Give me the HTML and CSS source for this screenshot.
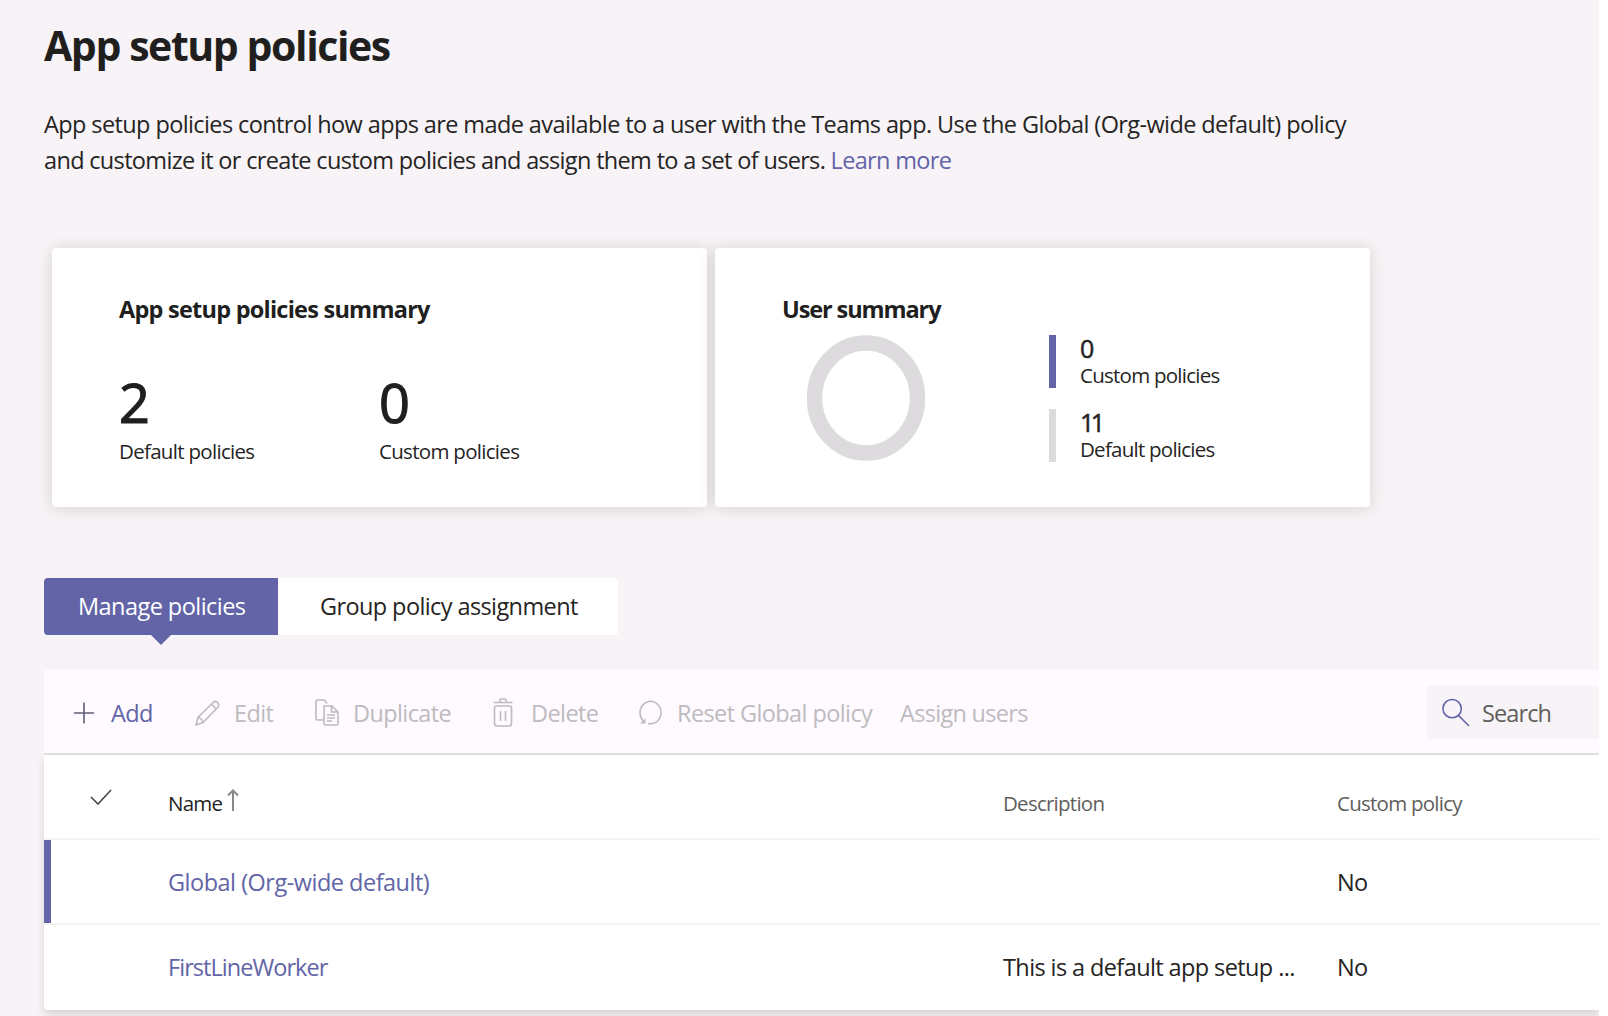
FILE: index.html
```html
<!DOCTYPE html>
<html lang="en">
<head>
<meta charset="utf-8">
<title>App setup policies</title>
<link rel="stylesheet" href="styles.css">
</head>
<body>
<main class="page">
  <h1 class="title">App setup policies</h1>
  <p class="intro">App setup policies control how apps are made available to a user with the Teams app. Use the Global (Org-wide default) policy<br><span class="intro-end">and customize it or create custom policies and assign them to a set of users. <a class="link" href="#">Learn more</a></span></p>

  <section class="cards">
    <article class="card">
      <h2 class="card-title">App setup policies summary</h2>
      <div class="stats">
        <div class="stat"><div class="stat-num">2</div><div class="stat-label">Default policies</div></div>
        <div class="stat"><div class="stat-num">0</div><div class="stat-label">Custom policies</div></div>
      </div>
    </article>
    <article class="card">
      <h2 class="card-title user-title">User summary</h2>
      <div class="usage">
        <svg class="donut" viewBox="0 0 118 126"><ellipse cx="59" cy="63" rx="51.5" ry="55" fill="none" stroke="#dddbde" stroke-width="15.5"/></svg>
        <div class="legend">
          <div class="legend-item custom"><div class="legend-num">0</div><div class="legend-label">Custom policies</div></div>
          <div class="legend-item"><div class="legend-num eleven">11</div><div class="legend-label">Default policies</div></div>
        </div>
      </div>
    </article>
  </section>

  <nav class="tabs">
    <a class="tab active" href="#">Manage policies</a>
    <a class="tab" href="#">Group policy assignment</a>
  </nav>

  <section class="panel">
    <div class="toolbar">
      <button class="tool add"><svg class="i-add" viewBox="0 0 20 22"><path d="M10 .5v21M0 11h20" /></svg><span>Add</span></button>
      <button class="tool edit"><svg class="i-edit" viewBox="0 0 25 26"><path d="M1 25l2-7.500L18.500 2q2-1.500 4 .5t.5 4.500L8 22.500zM16.500 4l4.500 5M3 17.500q4 .5 5 5"/></svg><span>Edit</span></button>
      <button class="tool dup"><svg class="i-dup" viewBox="0 0 24 27"><path d="M9 21H2.500Q1 21 1 19.500V2.500Q1 1 2.500 1H9.500L12 4.500M9 7h8l6 6v11.500q0 1.500-1.500 1.500h-11Q9 26 9 24.500zM16.500 7v6H23M12 16h8M12 19h8M12 22h5"/></svg><span>Duplicate</span></button>
      <button class="tool del"><svg class="i-del" viewBox="0 0 20 29"><path d="M.5 4.500h19M7 4V2q0-1 1-1h4q1 0 1 1v2M3.500 8h13q2 0 2 2v15.500q0 2.500-2.500 2.500h-12q-2.500 0-2.500-2.500V10q0-2 2-2zM7.500 13v10M12.500 13v10"/></svg><span>Delete</span></button>
      <button class="tool reset"><svg class="i-reset" viewBox="0 0 24 25"><path d="M5 21.500A10.500 11.300 0 1 1 15 23.300L9 24"/><path class="tip" d="M1 23.500h5.500v-5z"/></svg><span>Reset Global policy</span></button>
      <button class="tool assign"><span>Assign users</span></button>
      <div class="search"><svg class="i-search" viewBox="0 0 29 30"><circle cx="10.500" cy="11" r="9.500"/><path d="M17 18l11 11"/></svg><span>Search</span></div>
    </div>
    <div class="grid">
      <div class="row head">
        <div class="check"><svg class="i-check" viewBox="0 0 22 16"><path d="M1 8l7 7L21 1"/></svg></div>
        <div class="label name">Name <svg class="i-sort" viewBox="0 0 12 22"><path d="M6 22V1.500M1 6.500l5-5 5 5"/></svg></div>
        <div class="label">Description</div>
        <div class="label">Custom policy</div>
      </div>
      <div class="row selected">
        <div></div>
        <div><a class="link org" href="#">Global (Org-wide default)</a></div>
        <div></div>
        <div>No</div>
      </div>
      <div class="row">
        <div></div>
        <div><a class="link worker" href="#">FirstLineWorker</a></div>
        <div>This is a default app setup ...</div>
        <div>No</div>
      </div>
    </div>
  </section>
</main>
</body>
</html>
```
FILE: styles.css
```css
* { box-sizing: border-box; }
body { margin: 0; height: 1016px; overflow: hidden; background: #fff; color: #252423; font-family: "Open Sans", "Noto Sans", sans-serif; font-size: 23.5px; letter-spacing: -0.6px; }
.page { width: 1599px; height: 1016px; padding: 18px 0 0 44px; overflow: hidden; background: #f7f3f7; }
h1, h2, p { margin: 0; }
.title { font-size: 41px; line-height: 54px; font-weight: 700; letter-spacing: -1.42px; color: #201f1e; white-space: nowrap; }
.intro { margin-top: 34px; line-height: 36px; white-space: nowrap; }
.intro-end { letter-spacing: -0.67px; }
.link { color: #6264a7; text-decoration: none; }
.org { letter-spacing: -0.5px; }
.worker { letter-spacing: -0.95px; }

.cards { display: flex; gap: 8px; margin: 70px 0 0 8px; }
.card { width: 655px; height: 259px; padding: 41px 67px 0; background: #fff; border-radius: 4px; box-shadow: 0 1px 16px rgba(90, 80, 50, .2); }
.card-title { font-size: 23.5px; line-height: 40px; font-weight: 700; letter-spacing: -0.76px; color: #201f1e; white-space: nowrap; }
.user-title { letter-spacing: -1.1px; }
.stats { display: flex; margin-top: 40px; }
.stat { width: 260px; }
.stat-num { font-size: 54px; line-height: 66px; letter-spacing: 0; color: #201f1e; -webkit-text-stroke: 1.2px #201f1e; }
.stat-label { padding-top: 2px; font-size: 20.5px; line-height: 28px; letter-spacing: -0.7px; white-space: nowrap; }
.usage { display: flex; margin: 6px 0 0 25px; }
.donut { width: 118px; height: 126px; }
.legend { display: grid; gap: 21px; align-content: start; margin-left: 124px; }
.legend-item { height: 53px; padding-left: 24px; border-left: 7px solid #dddbde; }
.legend-item.custom { border-color: #6264a7; }
.legend-num { font-size: 25px; line-height: 27px; -webkit-text-stroke: .5px #252423; }
.legend-label { font-size: 20.5px; line-height: 26px; letter-spacing: -0.75px; white-space: nowrap; }
.eleven { letter-spacing: -3.5px; }

.tabs { display: flex; margin-top: 71px; height: 57px; width: 574px; background: #fff; border-radius: 4px; line-height: 57px; }
.tab { position: relative; padding-left: 42px; color: #252423; text-decoration: none; white-space: nowrap; }
.tab.active { width: 234px; padding-left: 34px; color: #fff; background: #6264a7; border-radius: 4px 0 0 4px; letter-spacing: -0.55px; }
.tab.active::after { content: ""; position: absolute; left: 107px; top: 57px; border: 10px solid transparent; border-top-color: #6264a7; border-bottom: 0; }

.panel { margin-top: 35px; }
.toolbar { display: flex; align-items: center; height: 85px; padding-top: 2px; background: #fefaff; border-bottom: 2px solid #e1dfe1; border-radius: 4px 0 0 0; }
.tool { display: flex; align-items: center; border: 0; padding: 0; background: none; font: inherit; letter-spacing: inherit; color: #bdbbbe; white-space: nowrap; }
svg { flex: none; fill: none; stroke: currentColor; stroke-width: 1.6; }
.add { width: 122px; padding-left: 30px; gap: 17px; color: #6264a7; }
.edit { width: 119px; padding-left: 29px; gap: 14px; }
.dup { width: 178px; padding-left: 30px; gap: 14px; }
.del { width: 147px; padding-left: 30px; gap: 18px; }
.reset { width: 290px; padding-left: 29px; gap: 14px; }
.assign { letter-spacing: -0.7px; }
.i-add { width: 20px; height: 22px; color: #605e75; }
.i-edit { width: 25px; height: 26px; }
.i-dup { width: 24px; height: 27px; }
.i-del { width: 20px; height: 29px; }
.i-reset { width: 24px; height: 25px; }
.tip { fill: currentColor; stroke: none; }
.search { display: flex; align-items: center; gap: 12px; margin-left: auto; width: 172px; height: 53px; padding-left: 15px; background: #f7f3f7; border-radius: 4px 0 0 4px; color: #605e5c; letter-spacing: -0.9px; }
.i-search { width: 28px; height: 29px; color: #6264a7; }

.grid { background: #fff; border-radius: 0 0 0 4px; box-shadow: 0 5px 8px rgba(60, 50, 50, .16); }
.row { display: grid; grid-template-columns: 124px 835px 334px 1fr; height: 85px; padding-top: 1px; align-items: center; border-bottom: 2px solid #f7f3f5; }
.row:last-child { border-bottom-color: transparent; }
.row.selected { box-shadow: inset 7px 0 #6264a7; }
.head { font-size: 20.5px; letter-spacing: -0.75px; color: #605e5c; }
.label { padding-top: 12px; }
.name { color: #252423; }
.check { padding-left: 46px; line-height: 1; }
.i-check { width: 22px; height: 16px; color: #484644; }
.i-sort { width: 12px; height: 22px; color: #8a8886; stroke-width: 2; }
```
